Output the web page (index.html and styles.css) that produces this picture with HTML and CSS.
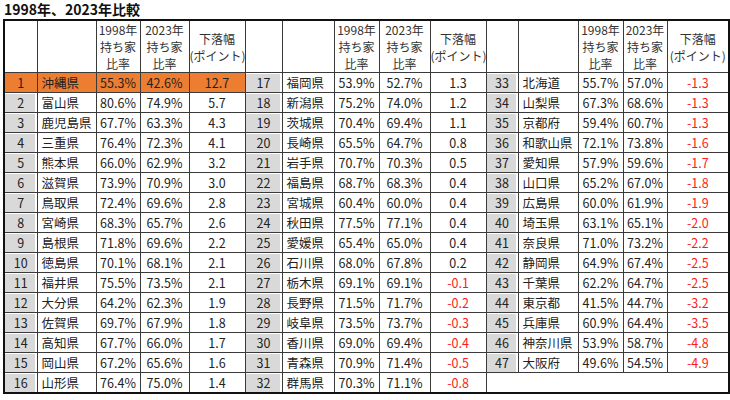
FILE: index.html
```html
<!DOCTYPE html>
<html lang="ja">
<head>
<meta charset="utf-8">
<link rel="stylesheet" href="styles.css">
</head>
<body>
<h1 class="title">1998年、2023年比較</h1>
<table class="tbl">
<colgroup>
<col class="c-r1"><col class="c-n1"><col class="c-a1"><col class="c-b1"><col class="c-d1">
<col class="c-r2"><col class="c-n2"><col class="c-a2"><col class="c-b2"><col class="c-d2">
<col class="c-r3"><col class="c-n3"><col class="c-a3"><col class="c-b3"><col class="c-d3">
</colgroup>
<thead>
<tr>
<th></th><th></th><th>1998年<br>持ち家<br>比率</th><th>2023年<br>持ち家<br>比率</th><th>下落幅<br>(ポイント)</th>
<th></th><th></th><th>1998年<br>持ち家<br>比率</th><th>2023年<br>持ち家<br>比率</th><th>下落幅<br>(ポイント)</th>
<th></th><th></th><th>1998年<br>持ち家<br>比率</th><th>2023年<br>持ち家<br>比率</th><th>下落幅<br>(ポイント)</th>
</tr>
</thead>
<tbody>
<tr><td class="r hl">1</td><td class="n hl">沖縄県</td><td class="p hl">55.3%</td><td class="p hl">42.6%</td><td class="d hl">12.7</td>
<td class="r">17</td><td class="n">福岡県</td><td class="p">53.9%</td><td class="p">52.7%</td><td class="d">1.3</td>
<td class="r">33</td><td class="n">北海道</td><td class="p">55.7%</td><td class="p">57.0%</td><td class="d neg">-1.3</td></tr>
<tr><td class="r">2</td><td class="n">富山県</td><td class="p">80.6%</td><td class="p">74.9%</td><td class="d">5.7</td>
<td class="r">18</td><td class="n">新潟県</td><td class="p">75.2%</td><td class="p">74.0%</td><td class="d">1.2</td>
<td class="r">34</td><td class="n">山梨県</td><td class="p">67.3%</td><td class="p">68.6%</td><td class="d neg">-1.3</td></tr>
<tr><td class="r">3</td><td class="n">鹿児島県</td><td class="p">67.7%</td><td class="p">63.3%</td><td class="d">4.3</td>
<td class="r">19</td><td class="n">茨城県</td><td class="p">70.4%</td><td class="p">69.4%</td><td class="d">1.1</td>
<td class="r">35</td><td class="n">京都府</td><td class="p">59.4%</td><td class="p">60.7%</td><td class="d neg">-1.3</td></tr>
<tr><td class="r">4</td><td class="n">三重県</td><td class="p">76.4%</td><td class="p">72.3%</td><td class="d">4.1</td>
<td class="r">20</td><td class="n">長崎県</td><td class="p">65.5%</td><td class="p">64.7%</td><td class="d">0.8</td>
<td class="r">36</td><td class="n">和歌山県</td><td class="p">72.1%</td><td class="p">73.8%</td><td class="d neg">-1.6</td></tr>
<tr><td class="r">5</td><td class="n">熊本県</td><td class="p">66.0%</td><td class="p">62.9%</td><td class="d">3.2</td>
<td class="r">21</td><td class="n">岩手県</td><td class="p">70.7%</td><td class="p">70.3%</td><td class="d">0.5</td>
<td class="r">37</td><td class="n">愛知県</td><td class="p">57.9%</td><td class="p">59.6%</td><td class="d neg">-1.7</td></tr>
<tr><td class="r">6</td><td class="n">滋賀県</td><td class="p">73.9%</td><td class="p">70.9%</td><td class="d">3.0</td>
<td class="r">22</td><td class="n">福島県</td><td class="p">68.7%</td><td class="p">68.3%</td><td class="d">0.4</td>
<td class="r">38</td><td class="n">山口県</td><td class="p">65.2%</td><td class="p">67.0%</td><td class="d neg">-1.8</td></tr>
<tr><td class="r">7</td><td class="n">鳥取県</td><td class="p">72.4%</td><td class="p">69.6%</td><td class="d">2.8</td>
<td class="r">23</td><td class="n">宮城県</td><td class="p">60.4%</td><td class="p">60.0%</td><td class="d">0.4</td>
<td class="r">39</td><td class="n">広島県</td><td class="p">60.0%</td><td class="p">61.9%</td><td class="d neg">-1.9</td></tr>
<tr><td class="r">8</td><td class="n">宮崎県</td><td class="p">68.3%</td><td class="p">65.7%</td><td class="d">2.6</td>
<td class="r">24</td><td class="n">秋田県</td><td class="p">77.5%</td><td class="p">77.1%</td><td class="d">0.4</td>
<td class="r">40</td><td class="n">埼玉県</td><td class="p">63.1%</td><td class="p">65.1%</td><td class="d neg">-2.0</td></tr>
<tr><td class="r">9</td><td class="n">島根県</td><td class="p">71.8%</td><td class="p">69.6%</td><td class="d">2.2</td>
<td class="r">25</td><td class="n">愛媛県</td><td class="p">65.4%</td><td class="p">65.0%</td><td class="d">0.4</td>
<td class="r">41</td><td class="n">奈良県</td><td class="p">71.0%</td><td class="p">73.2%</td><td class="d neg">-2.2</td></tr>
<tr><td class="r">10</td><td class="n">徳島県</td><td class="p">70.1%</td><td class="p">68.1%</td><td class="d">2.1</td>
<td class="r">26</td><td class="n">石川県</td><td class="p">68.0%</td><td class="p">67.8%</td><td class="d">0.2</td>
<td class="r">42</td><td class="n">静岡県</td><td class="p">64.9%</td><td class="p">67.4%</td><td class="d neg">-2.5</td></tr>
<tr><td class="r">11</td><td class="n">福井県</td><td class="p">75.5%</td><td class="p">73.5%</td><td class="d">2.1</td>
<td class="r">27</td><td class="n">栃木県</td><td class="p">69.1%</td><td class="p">69.1%</td><td class="d neg">-0.1</td>
<td class="r">43</td><td class="n">千葉県</td><td class="p">62.2%</td><td class="p">64.7%</td><td class="d neg">-2.5</td></tr>
<tr><td class="r">12</td><td class="n">大分県</td><td class="p">64.2%</td><td class="p">62.3%</td><td class="d">1.9</td>
<td class="r">28</td><td class="n">長野県</td><td class="p">71.5%</td><td class="p">71.7%</td><td class="d neg">-0.2</td>
<td class="r">44</td><td class="n">東京都</td><td class="p">41.5%</td><td class="p">44.7%</td><td class="d neg">-3.2</td></tr>
<tr><td class="r">13</td><td class="n">佐賀県</td><td class="p">69.7%</td><td class="p">67.9%</td><td class="d">1.8</td>
<td class="r">29</td><td class="n">岐阜県</td><td class="p">73.5%</td><td class="p">73.7%</td><td class="d neg">-0.3</td>
<td class="r">45</td><td class="n">兵庫県</td><td class="p">60.9%</td><td class="p">64.4%</td><td class="d neg">-3.5</td></tr>
<tr><td class="r">14</td><td class="n">高知県</td><td class="p">67.7%</td><td class="p">66.0%</td><td class="d">1.7</td>
<td class="r">30</td><td class="n">香川県</td><td class="p">69.0%</td><td class="p">69.4%</td><td class="d neg">-0.4</td>
<td class="r">46</td><td class="n">神奈川県</td><td class="p">53.9%</td><td class="p">58.7%</td><td class="d neg">-4.8</td></tr>
<tr><td class="r">15</td><td class="n">岡山県</td><td class="p">67.2%</td><td class="p">65.6%</td><td class="d">1.6</td>
<td class="r">31</td><td class="n">青森県</td><td class="p">70.9%</td><td class="p">71.4%</td><td class="d neg">-0.5</td>
<td class="r">47</td><td class="n">大阪府</td><td class="p">49.6%</td><td class="p">54.5%</td><td class="d neg">-4.9</td></tr>
<tr><td class="r">16</td><td class="n">山形県</td><td class="p">76.4%</td><td class="p">75.0%</td><td class="d">1.4</td>
<td class="r">32</td><td class="n">群馬県</td><td class="p">70.3%</td><td class="p">71.1%</td><td class="d neg">-0.8</td>
<td class="empty" colspan="5"></td></tr>
</tbody>
</table>
</body>
</html>
```
FILE: styles.css
```css
html, body {
  margin: 0;
  padding: 0;
  background: #fff;
}
body {
  padding: 1px 0 0 3px;
  font-family: "Noto Sans CJK JP", "Noto Sans", sans-serif;
  color: #222;
}
.title {
  margin: 0 0 0 1px;
  font-size: 14px;
  line-height: 17px;
  font-weight: bold;
  color: #111;
  height: 17px;
}
.tbl {
  margin-top: 1px;
  border-collapse: collapse;
  table-layout: fixed;
  width: 725px;
  border: 2px solid #111;
  font-size: 12.5px;
}
.c-r1 { width: 33px; }
.c-n1 { width: 59px; }
.c-a1 { width: 44px; }
.c-b1 { width: 49px; }
.c-d1 { width: 56px; }
.c-r2 { width: 37px; }
.c-n2 { width: 52px; }
.c-a2 { width: 45px; }
.c-b2 { width: 51px; }
.c-d2 { width: 56px; }
.c-r3 { width: 32px; }
.c-n3 { width: 60px; }
.c-a3 { width: 45px; }
.c-b3 { width: 44px; }
.c-d3 { width: 62px; }
.tbl th, .tbl td {
  border: 1px solid #3a3a3a;
  padding: 0;
  white-space: nowrap;
  overflow: hidden;
}
.tbl th {
  height: 50px;
  font-weight: normal;
  font-size: 12px;
  line-height: 17px;
  color: #333;
  text-align: center;
  vertical-align: middle;
}
.tbl td {
  height: 19px;
  line-height: 19px;
  text-align: center;
}
.tbl td.r {
  background: #d9d9d9;
  box-shadow: inset -2px 1px 0 #fff;
}
.tbl td.n {
  text-align: left;
  padding-left: 4px;
}
.tbl td.neg {
  color: #ff1a1a;
}
.tbl td.hl {
  background: #ed7d31;
  box-shadow: none;
}
.tbl td.empty {
  border-bottom: 2px solid #111;
}
```
